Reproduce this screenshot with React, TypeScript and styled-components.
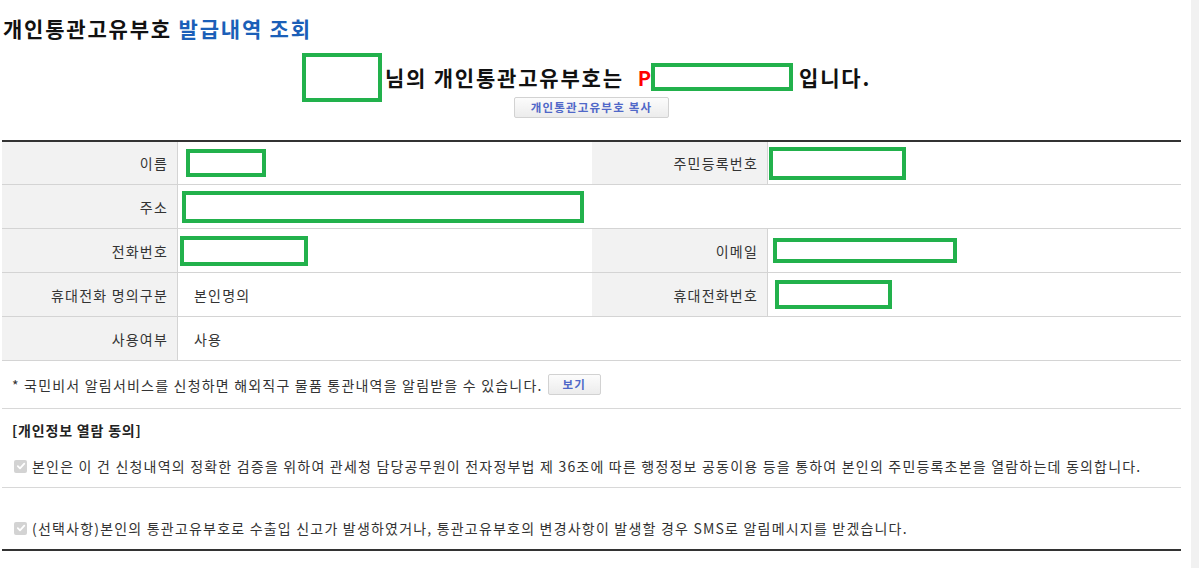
import * as React from 'react';
import styled, { createGlobalStyle } from 'styled-components';

const GlobalStyle = createGlobalStyle`
  html, body {
    margin: 0;
    padding: 0;
    background: #fff;
    overflow: hidden;
  }
  body {
    font-family: "Noto Sans CJK KR", "Noto Sans", sans-serif;
    color: #222;
  }
`;

type Row = {
  label: string;
  value?: string;
  box?: { w: number; h: number; dx: number };
  label2?: string;
  box2?: { w: number; h: number; dx: number };
};

const rows: Row[] = [
  { label: '이름', box: { w: 80, h: 28, dx: 8 }, label2: '주민등록번호', box2: { w: 137, h: 33, dx: 1 } },
  { label: '주소', box: { w: 402, h: 32, dx: 4 } },
  { label: '전화번호', box: { w: 128, h: 30, dx: 2 }, label2: '이메일', box2: { w: 184, h: 25, dx: 5 } },
  { label: '휴대전화 명의구분', value: '본인명의', label2: '휴대전화번호', box2: { w: 117, h: 29, dx: 7 } },
  { label: '사용여부', value: '사용' },
];

function CheckMark(): React.ReactElement {
  return (
    <StyledCheck>
      <svg width="10" height="10" viewBox="0 0 10 10">
        <path d="M1.8 5.2 L4 7.4 L8.3 2.6" fill="none" stroke="#fff" strokeWidth="1.8" strokeLinecap="round" strokeLinejoin="round" />
      </svg>
    </StyledCheck>
  );
}

function App(): React.ReactElement {
  return (
    <>
      <GlobalStyle />
      <StyledShell>
        <StyledContent>
          <StyledTitle>
            개인통관고유부호 <StyledTitleBlue>발급내역 조회</StyledTitleBlue>
          </StyledTitle>

          <StyledHeadline>
            <StyledRedact $w={80} $h={49} />
            <StyledHeadText>님의 개인통관고유부호는</StyledHeadText>
            <StyledPrefix>P</StyledPrefix>
            <StyledRedact $w={142} $h={28} />
            <StyledHeadEnd>입니다.</StyledHeadEnd>
          </StyledHeadline>
          <StyledCopyRow>
            <StyledButton $wide>개인통관고유부호 복사</StyledButton>
          </StyledCopyRow>

          <StyledTable>
            {rows.map((row) => (
              <React.Fragment key={row.label}>
                <StyledLabel>{row.label}</StyledLabel>
                <StyledValue $span={row.label2 ? 1 : 3}>
                  {row.box && <StyledRedact $w={row.box.w} $h={row.box.h} $dx={row.box.dx} />}
                  {row.value && <StyledValueText>{row.value}</StyledValueText>}
                </StyledValue>
                {row.label2 && (
                  <>
                    <StyledLabel>{row.label2}</StyledLabel>
                    <StyledValue $span={1}>
                      {row.box2 && <StyledRedact $w={row.box2.w} $h={row.box2.h} $dx={row.box2.dx} />}
                    </StyledValue>
                  </>
                )}
              </React.Fragment>
            ))}
          </StyledTable>

          <StyledNotice>
            * 국민비서 알림서비스를 신청하면 해외직구 물품 통관내역을 알림받을 수 있습니다.
            <StyledButton>보기</StyledButton>
          </StyledNotice>

          <StyledConsent>
            <StyledConsentTitle>[개인정보 열람 동의]</StyledConsentTitle>
            <StyledCheckRow>
              <CheckMark />
              본인은 이 건 신청내역의 정확한 검증을 위하여 관세청 담당공무원이 전자정부법 제 36조에 따른 행정정보 공동이용 등을 통하여 본인의 주민등록초본을 열람하는데 동의합니다.
            </StyledCheckRow>
          </StyledConsent>
          <StyledOptional>
            <StyledCheckRow>
              <CheckMark />
              (선택사항)본인의 통관고유부호로 수출입 신고가 발생하였거나, 통관고유부호의 변경사항이 발생할 경우 SMS로 알림메시지를 받겠습니다.
            </StyledCheckRow>
          </StyledOptional>
        </StyledContent>
        <StyledScrollTrack />
      </StyledShell>
    </>
  );
}

const StyledShell = styled.div`
  display: flex;
  height: 568px;
`;

const StyledContent = styled.div`
  flex: 1;
  padding: 0 10px 0 2px;
  min-width: 0;
`;

const StyledScrollTrack = styled.div`
  width: 8px;
  background: #f1f1f1;
`;

const StyledTitle = styled.h1`
  margin: 0;
  padding: 15px 0 0 1px;
  height: 26px;
  line-height: 26px;
  font-size: 21px;
  font-weight: 700;
  color: #111;
  letter-spacing: 1.8px;
`;

const StyledTitleBlue = styled.span`
  color: #1b5fb8;
`;

const StyledHeadline = styled.div`
  display: flex;
  align-items: center;
  justify-content: center;
  height: 40px;
  margin-top: 16px;
  padding-right: 10px;
`;

const StyledRedact = styled.span<{ $w: number; $h: number; $dx?: number }>`
  display: inline-block;
  flex: none;
  box-sizing: border-box;
  width: ${({ $w }) => $w}px;
  height: ${({ $h }) => $h}px;
  margin-left: ${({ $dx }) => $dx ?? 0}px;
  border: 4px solid #22b14c;
  background: #fff;
`;

const StyledHeadText = styled.span`
  font-size: 21px;
  font-weight: 700;
  color: #111;
  margin-left: 3px;
  letter-spacing: 1.8px;
`;

const StyledPrefix = styled.span`
  font-size: 20px;
  font-weight: 700;
  color: #f00;
  margin-left: 14px;
`;

const StyledHeadEnd = styled.span`
  font-size: 21px;
  font-weight: 700;
  color: #111;
  margin-left: 6px;
  letter-spacing: 1.8px;
`;

const StyledCopyRow = styled.div`
  display: flex;
  justify-content: center;
  margin-bottom: 22px;
`;

const StyledButton = styled.button<{ $wide?: boolean }>`
  box-sizing: border-box;
  height: 21px;
  padding: 0 ${({ $wide }) => ($wide ? '16px' : '14px')};
  margin-left: ${({ $wide }) => ($wide ? '0' : '5px')};
  border: 1px solid #d2d2d2;
  border-radius: 2px;
  background: linear-gradient(#fcfcfc, #ececec);
  font-family: "Noto Sans CJK KR", sans-serif;
  font-size: 11.5px;
  font-weight: 700;
  color: #5068c8;
  line-height: 19px;
  letter-spacing: 1.2px;
  vertical-align: middle;
`;

const StyledTable = styled.div`
  display: grid;
  grid-template-columns: 176px 414px 176px 1fr;
  grid-template-rows: 43px repeat(4, 44px);
  border-top: 2px solid #333;
`;

const StyledLabel = styled.div`
  display: flex;
  align-items: center;
  justify-content: flex-end;
  padding-right: 9px;
  background: #f2f2f2;
  border-bottom: 1px solid #d4d4d4;
  border-right: 1px solid #d4d4d4;
  font-size: 14px;
  color: #333;
  letter-spacing: 1.2px;
`;

const StyledValue = styled.div<{ $span: number }>`
  grid-column: span ${({ $span }) => $span};
  display: flex;
  align-items: center;
  border-bottom: 1px solid #d4d4d4;
`;

const StyledValueText = styled.span`
  padding-left: 16px;
  font-size: 14px;
  color: #333;
  letter-spacing: 1.2px;
`;

const StyledNotice = styled.div`
  display: flex;
  align-items: center;
  height: 47px;
  padding-left: 10px;
  border-bottom: 1px solid #d8d8d8;
  font-size: 14px;
  color: #333;
  letter-spacing: 1.2px;
`;

const StyledConsent = styled.div`
  padding: 11px 0 11px 10px;
  border-bottom: 1px solid #d8d8d8;
`;

const StyledConsentTitle = styled.div`
  height: 20px;
  line-height: 20px;
  font-size: 14px;
  font-weight: 700;
  color: #222;
  margin-bottom: 16px;
  letter-spacing: 0.8px;
`;

const StyledOptional = styled.div`
  padding: 30px 0 11px 10px;
  border-bottom: 2px solid #333;
`;

const StyledCheckRow = styled.div`
  display: flex;
  align-items: center;
  height: 20px;
  font-size: 14px;
  color: #333;
  letter-spacing: 1.2px;
  white-space: nowrap;
`;

const StyledCheck = styled.span`
  display: inline-flex;
  align-items: center;
  justify-content: center;
  width: 13px;
  height: 13px;
  margin: 0 5px 0 2px;
  border-radius: 2px;
  background: #d3d3d3;
  flex: none;
`;

export default App;
